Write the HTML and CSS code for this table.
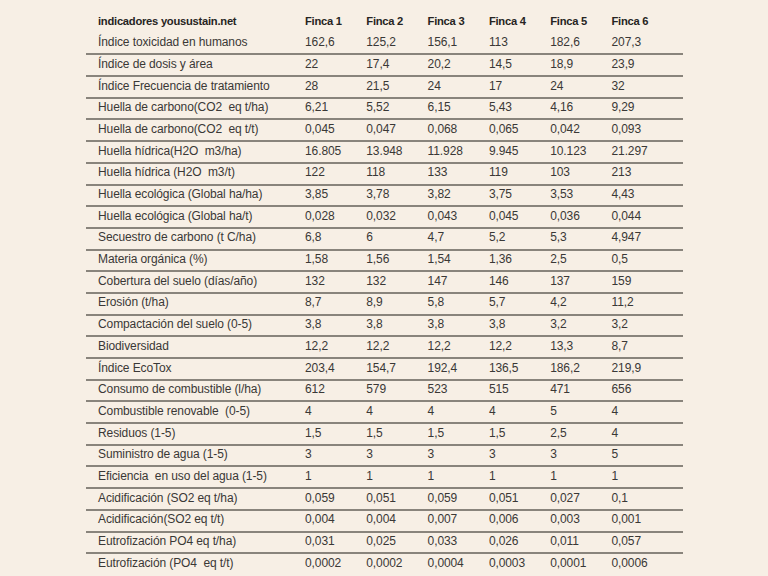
FILE: index.html
```html
<!DOCTYPE html>
<html lang="es">
<head>
<meta charset="utf-8">
<title>Indicadores yousustain.net</title>
<link rel="stylesheet" href="styles.css">
</head>
<body>
<main class="page">
<table class="data">
<colgroup>
<col class="c-label"><col class="c-val"><col class="c-val"><col class="c-val"><col class="c-val"><col class="c-val"><col class="c-last">
</colgroup>
<thead>
<tr class="head"><th>indicadores yousustain.net</th><th>Finca 1</th><th>Finca 2</th><th>Finca 3</th><th>Finca 4</th><th>Finca 5</th><th>Finca 6</th></tr>
</thead>
<tbody>
<tr><td>Índice toxicidad en humanos</td><td>162,6</td><td>125,2</td><td>156,1</td><td>113</td><td>182,6</td><td>207,3</td></tr>
<tr><td>Índice de dosis y área</td><td>22</td><td>17,4</td><td>20,2</td><td>14,5</td><td>18,9</td><td>23,9</td></tr>
<tr><td>Índice Frecuencia de tratamiento</td><td>28</td><td>21,5</td><td>24</td><td>17</td><td>24</td><td>32</td></tr>
<tr><td>Huella de carbono(CO2 &nbsp;eq t/ha)</td><td>6,21</td><td>5,52</td><td>6,15</td><td>5,43</td><td>4,16</td><td>9,29</td></tr>
<tr><td>Huella de carbono(CO2 &nbsp;eq t/t)</td><td>0,045</td><td>0,047</td><td>0,068</td><td>0,065</td><td>0,042</td><td>0,093</td></tr>
<tr><td>Huella hídrica(H2O &nbsp;m3/ha)</td><td>16.805</td><td>13.948</td><td>11.928</td><td>9.945</td><td>10.123</td><td>21.297</td></tr>
<tr><td>Huella hídrica (H2O &nbsp;m3/t)</td><td>122</td><td>118</td><td>133</td><td>119</td><td>103</td><td>213</td></tr>
<tr><td>Huella ecológica (Global ha/ha)</td><td>3,85</td><td>3,78</td><td>3,82</td><td>3,75</td><td>3,53</td><td>4,43</td></tr>
<tr><td>Huella ecológica (Global ha/t)</td><td>0,028</td><td>0,032</td><td>0,043</td><td>0,045</td><td>0,036</td><td>0,044</td></tr>
<tr><td>Secuestro de carbono (t C/ha)</td><td>6,8</td><td>6</td><td>4,7</td><td>5,2</td><td>5,3</td><td>4,947</td></tr>
<tr><td>Materia orgánica (%)</td><td>1,58</td><td>1,56</td><td>1,54</td><td>1,36</td><td>2,5</td><td>0,5</td></tr>
<tr><td>Cobertura del suelo (días/año)</td><td>132</td><td>132</td><td>147</td><td>146</td><td>137</td><td>159</td></tr>
<tr><td>Erosión (t/ha)</td><td>8,7</td><td>8,9</td><td>5,8</td><td>5,7</td><td>4,2</td><td>11,2</td></tr>
<tr><td>Compactación del suelo (0-5)</td><td>3,8</td><td>3,8</td><td>3,8</td><td>3,8</td><td>3,2</td><td>3,2</td></tr>
<tr><td>Biodiversidad</td><td>12,2</td><td>12,2</td><td>12,2</td><td>12,2</td><td>13,3</td><td>8,7</td></tr>
<tr><td>Índice EcoTox</td><td>203,4</td><td>154,7</td><td>192,4</td><td>136,5</td><td>186,2</td><td>219,9</td></tr>
<tr><td>Consumo de combustible (l/ha)</td><td>612</td><td>579</td><td>523</td><td>515</td><td>471</td><td>656</td></tr>
<tr><td>Combustible renovable &nbsp;(0-5)</td><td>4</td><td>4</td><td>4</td><td>4</td><td>5</td><td>4</td></tr>
<tr><td>Residuos (1-5)</td><td>1,5</td><td>1,5</td><td>1,5</td><td>1,5</td><td>2,5</td><td>4</td></tr>
<tr><td>Suministro de agua (1-5)</td><td>3</td><td>3</td><td>3</td><td>3</td><td>3</td><td>5</td></tr>
<tr><td>Eficiencia &nbsp;en uso del agua (1-5)</td><td>1</td><td>1</td><td>1</td><td>1</td><td>1</td><td>1</td></tr>
<tr><td>Acidificación (SO2 eq t/ha)</td><td>0,059</td><td>0,051</td><td>0,059</td><td>0,051</td><td>0,027</td><td>0,1</td></tr>
<tr><td>Acidificación(SO2 eq t/t)</td><td>0,004</td><td>0,004</td><td>0,007</td><td>0,006</td><td>0,003</td><td>0,001</td></tr>
<tr><td>Eutrofización PO4 eq t/ha)</td><td>0,031</td><td>0,025</td><td>0,033</td><td>0,026</td><td>0,011</td><td>0,057</td></tr>
<tr class="last"><td>Eutrofización (PO4 &nbsp;eq t/t)</td><td>0,0002</td><td>0,0002</td><td>0,0004</td><td>0,0003</td><td>0,0001</td><td>0,0006</td></tr>
</tbody>
</table>
</main>
</body>
</html>
```

FILE: styles.css
```css
html, body {
  margin: 0;
  padding: 0;
  background: #f7efe5;
}

.page {
  padding: 12px 0 0 86px;
  height: 576px;
  box-sizing: border-box;
  overflow: hidden;
}

.data {
  width: 597px;
  border-collapse: collapse;
  table-layout: fixed;
  font-family: "Liberation Sans", Arial, sans-serif;
  color: #3a3836;
}

.c-label { width: 219px; }
.c-val { width: 61.3px; }

.data th,
.data td {
  text-align: left;
  vertical-align: top;
  padding: 1.5px 0 4.2px 0;
  line-height: 14px;
  white-space: nowrap;
  border-bottom: 2px solid #89847c;
}

.data th:first-child,
.data td:first-child {
  padding-left: 12px;
}

.data th {
  font-size: 11.2px;
  font-weight: bold;
  letter-spacing: -0.25px;
  color: #262422;
  border-bottom-color: transparent;
}

.data td {
  font-size: 12px;
  letter-spacing: -0.1px;
}

.data tr.last td {
  border-bottom-color: transparent;
}
```
